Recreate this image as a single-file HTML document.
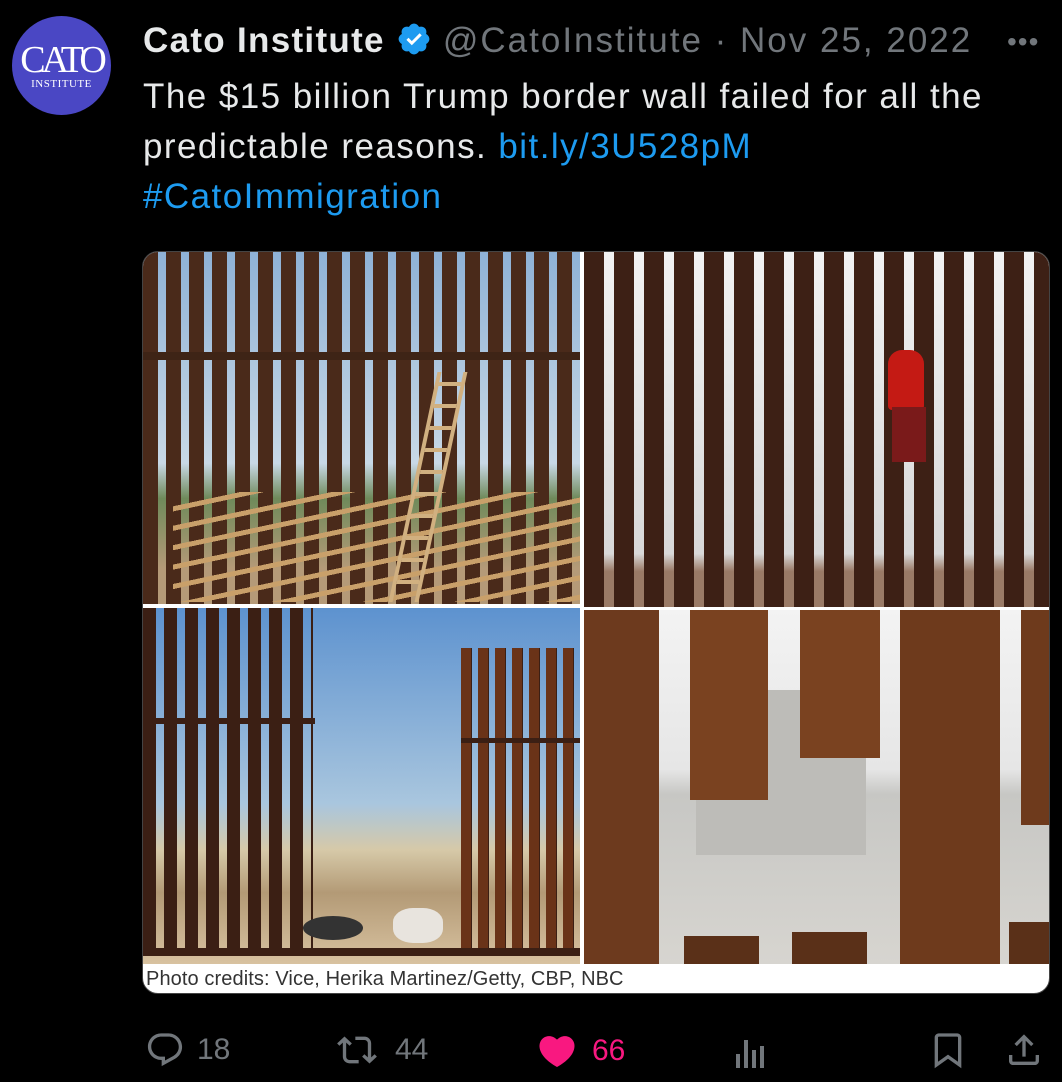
<!DOCTYPE html>
<html><head><meta charset="utf-8"><style>
*{margin:0;padding:0;box-sizing:border-box}
body{width:1062px;height:1082px;background:#000;font-family:"Liberation Sans",Arial,sans-serif;position:relative;overflow:hidden;color:#e7e9ea}
.abs{position:absolute}
.av{left:12px;top:16px;width:99px;height:99px;border-radius:50%;background:#4a47c4;color:#fff;font-family:"Liberation Serif",serif;text-align:center}
.hdr{left:143px;top:20px;font-size:35px;letter-spacing:1.3px;white-space:nowrap;line-height:42px}
.txt{left:143px;top:72px;font-size:35px;letter-spacing:1.45px;line-height:50px;width:880px}
a{color:#1d9bf0;text-decoration:none}
.media{left:142px;top:251px;width:908px;height:743px;border-radius:16px;overflow:hidden;background:#fff;border:1px solid #444}
.q{position:absolute;overflow:hidden}
.act{top:1030px;font-size:30px;color:#71767b;display:flex;align-items:center}
</style></head><body>
<div class="abs av"><div style="font-size:38px;letter-spacing:-4px;margin-top:26px;line-height:36px">CATO</div><div style="font-size:11px;letter-spacing:0.5px">INSTITUTE</div></div>
<div class="abs hdr"><b style="color:#e7e9ea">Cato Institute</b>
<svg width="36" height="36" viewBox="0 0 24 24" style="vertical-align:-5px"><path fill="#1d9bf0" d="M22.25 12c0-1.430-.88-2.670-2.190-3.340.46-1.390.2-2.900-.81-3.910s-2.520-1.270-3.910-.81c-.66-1.310-1.910-2.190-3.340-2.190s-2.670.88-3.330 2.190c-1.400-.46-2.910-.2-3.920.81s-1.260 2.520-.8 3.910c-1.310.67-2.200 1.910-2.200 3.340s.89 2.670 2.200 3.340c-.46 1.390-.21 2.900.8 3.910s2.520 1.260 3.910.81c.67 1.310 1.910 2.190 3.340 2.190s2.680-.88 3.340-2.190c1.390.45 2.900.2 3.910-.81s1.270-2.520.81-3.910c1.310-.67 2.190-1.910 2.190-3.340z"/><path fill="#fff" d="M10.54 16.2l-3.6-3.6 1.4-1.4 2.2 2.2 5.2-5.2 1.4 1.4z"/></svg>
<span style="color:#71767b;letter-spacing:2px">@CatoInstitute · Nov 25, 2022</span></div>
<div class="abs" style="left:1007px;top:26px;color:#71767b;font-size:28px;letter-spacing:1px">•••</div>
<div class="abs txt">The $15 billion Trump border wall failed for all the predictable reasons. <a>bit.ly/3U528pM</a><br><a>#CatoImmigration</a></div>

<div class="abs media">
 <div class="q" style="left:0;top:0;width:437px;height:352px;background:linear-gradient(#8fb2d6,#c8d8e6 60%,#6f8a5a 70%,#b59a78 90%)">
  <div class="abs" style="inset:0 0 0 0;background:repeating-linear-gradient(90deg,#4a2a1a 0 15px,transparent 15px 23px)"></div>
  <div class="abs" style="left:0;top:100px;width:437px;height:8px;background:#3e2416"></div>
  <div class="abs" style="left:30px;top:240px;width:407px;height:110px;background:repeating-linear-gradient(168deg,transparent 0 14px,#c9a06a 14px 19px)"></div>
  <div class="abs" style="left:270px;top:120px;width:30px;height:230px;transform:skewX(-12deg);border-left:4px solid #d1b080;border-right:4px solid #d1b080;background:repeating-linear-gradient(0deg,transparent 0 18px,#d1b080 18px 22px)"></div>
 </div>
 <div class="q" style="left:441px;top:0;width:467px;height:355px;background:linear-gradient(#f2f2f2,#d8d8d8 85%,#9a7a66 90%)">
  <div class="abs" style="inset:0;background:repeating-linear-gradient(90deg,#3d2015 0 20px,transparent 20px 30px)"></div>
  <div class="abs" style="left:304px;top:98px;width:36px;height:60px;background:#c41a14;border-radius:14px 14px 4px 4px"></div>
  <div class="abs" style="left:308px;top:155px;width:34px;height:55px;background:#7a1a1a"></div>
 </div>
 <div class="q" style="left:0;top:356px;width:437px;height:356px;background:linear-gradient(#5d92cf,#a9c6de 55%,#d6c9a8 68%,#b39a76 80%,#d8c2a0)">
  <div class="abs" style="left:0;top:0;width:170px;height:340px;background:repeating-linear-gradient(90deg,#3b1f14 0 13px,transparent 13px 21px)"></div>
  <div class="abs" style="left:0;top:110px;width:172px;height:6px;background:#3b1f14"></div>
  <div class="abs" style="left:318px;top:40px;width:119px;height:300px;background:repeating-linear-gradient(90deg,#6a3318 0 10px,#3b1f14 10px 11px,transparent 11px 17px)"></div>
  <div class="abs" style="left:318px;top:130px;width:119px;height:5px;background:#3b1f14"></div>
  <div class="abs" style="left:0;top:340px;width:437px;height:8px;background:#3b1f14"></div>
  <div class="abs" style="left:160px;top:308px;width:60px;height:24px;border-radius:50%;background:#333"></div>
  <div class="abs" style="left:250px;top:300px;width:50px;height:35px;background:#e8e4de;border-radius:40%"></div>
 </div>
 <div class="q" style="left:441px;top:358px;width:467px;height:354px;background:linear-gradient(#f3f3f3,#e6e6e6 45%,#c7c7c4 52%,#d7d5d0)">
  <div class="abs" style="left:112px;top:80px;width:170px;height:165px;background:#bdbcb8"></div>
  <div class="abs" style="left:0;top:0;width:75px;height:354px;background:#6d3a1e"></div>
  <div class="abs" style="left:106px;top:0;width:78px;height:190px;background:#7a4220"></div>
  <div class="abs" style="left:216px;top:0;width:80px;height:148px;background:#7a4220"></div>
  <div class="abs" style="left:316px;top:0;width:100px;height:354px;background:#6e3a1c"></div>
  <div class="abs" style="left:437px;top:0;width:30px;height:215px;background:#6e3a1c"></div>
  <div class="abs" style="left:100px;top:326px;width:75px;height:28px;background:#5a3018"></div>
  <div class="abs" style="left:208px;top:322px;width:75px;height:32px;background:#5a3018"></div>
  <div class="abs" style="left:425px;top:312px;width:42px;height:42px;background:#5a3018"></div>
 </div>
 <div class="abs" style="left:3px;top:713px;font-size:20px;color:#333;line-height:28px;letter-spacing:0.1px">Photo credits: Vice, Herika Martinez/Getty, CBP, NBC</div>
</div>

<div class="abs act" style="left:145px"><svg width="40" height="40" viewBox="0 0 24 24"><path fill="#71767b" d="M1.751 10c0-4.420 3.584-8 8.005-8h4.366c4.490 0 8.129 3.640 8.129 8.130 0 2.960-1.607 5.680-4.196 7.110l-8.054 4.460v-3.690h-.067c-4.490.1-8.183-3.510-8.183-8.010zm8.005-6c-3.317 0-6.005 2.690-6.005 6 0 3.370 2.770 6.080 6.138 6.010l.351-.01h1.761v2.300l5.087-2.810c1.951-1.080 3.163-3.130 3.163-5.360 0-3.390-2.744-6.130-6.129-6.130H9.756z"/></svg><span style="margin-left:12px">18</span></div>
<div class="abs act" style="left:337px"><svg width="40" height="40" viewBox="0 0 24 24"><path fill="#71767b" d="M4.5 3.88l4.432 4.140-1.364 1.460L5.5 7.550V16c0 1.100.896 2 2 2H13v2H7.500c-2.209 0-4-1.790-4-4V7.550L1.432 9.480.068 8.020 4.500 3.880zM16.500 6H11V4h5.500c2.209 0 4 1.790 4 4v8.450l2.068-1.930 1.364 1.460-4.432 4.140-4.432-4.140 1.364-1.460 2.068 1.930V8c0-1.100-.896-2-2-2z"/></svg><span style="margin-left:18px">44</span></div>
<div class="abs act" style="left:536px;color:#f91880"><svg width="42" height="42" viewBox="0 0 24 24"><path fill="#f91880" d="M20.884 13.190c-1.351 2.480-4.001 5.120-8.379 7.670l-.503.3-.504-.3c-4.379-2.550-7.029-5.190-8.382-7.670-1.360-2.500-1.410-4.860-.514-6.670.887-1.790 2.647-2.910 4.601-3.010 1.651-.09 3.368.56 4.798 2.010 1.429-1.450 3.146-2.100 4.796-2.010 1.954.1 3.714 1.220 4.601 3.010.896 1.810.846 4.170-.514 6.670z"/></svg><span style="margin-left:14px">66</span></div>
<div class="abs" style="left:736px;top:1038px;width:34px;height:30px"><div class="abs" style="left:0;top:16px;width:4px;height:14px;background:#71767b"></div><div class="abs" style="left:8px;top:2px;width:4px;height:28px;background:#71767b"></div><div class="abs" style="left:16px;top:12px;width:4px;height:18px;background:#71767b"></div><div class="abs" style="left:24px;top:8px;width:4px;height:22px;background:#71767b"></div></div>
<div class="abs act" style="left:928px"><svg width="40" height="40" viewBox="0 0 24 24"><path fill="#71767b" d="M4 4.500C4 3.120 5.119 2 6.500 2h11C18.881 2 20 3.120 20 4.500v18.440l-8-5.710-8 5.710V4.500zM6.500 4c-.276 0-.5.22-.5.5v14.560l6-4.290 6 4.290V4.500c0-.28-.224-.5-.5-.5h-11z"/></svg></div>
<div class="abs act" style="left:1004px"><svg width="40" height="40" viewBox="0 0 24 24"><path fill="#71767b" d="M12 2.590l5.700 5.700-1.410 1.420L13 6.410V16h-2V6.410l-3.300 3.300-1.410-1.420L12 2.590zM21 15l-.02 3.510c0 1.380-1.120 2.490-2.500 2.490H5.500C4.110 21 3 19.880 3 18.500V15h2v3.500c0 .28.22.5.5.5h12.980c.28 0 .5-.22.5-.5L19 15h2z"/></svg></div>
</body></html>
